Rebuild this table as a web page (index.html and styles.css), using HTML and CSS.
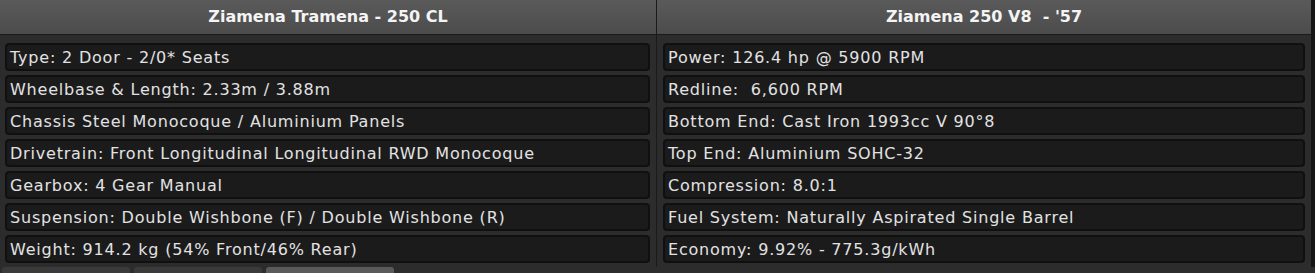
FILE: index.html
```html
<!DOCTYPE html>
<html lang="en">

<head>
    <meta charset="UTF-8">
    <title>Car Comparison</title>
    <link rel="stylesheet" href="styles.css">
</head>

<body>
    <div class="compare">
        <div class="column">
            <div class="column-header">Ziamena Tramena - 250 CL</div>
            <div class="rows">
                <div class="row">Type: 2 Door - 2/0* Seats</div>
                <div class="row">Wheelbase &amp; Length: 2.33m / 3.88m</div>
                <div class="row">Chassis Steel Monocoque / Aluminium Panels</div>
                <div class="row">Drivetrain: Front Longitudinal Longitudinal RWD Monocoque</div>
                <div class="row">Gearbox: 4 Gear Manual</div>
                <div class="row">Suspension: Double Wishbone (F) / Double Wishbone (R)</div>
                <div class="row">Weight: 914.2 kg (54% Front/46% Rear)</div>
            </div>
        </div>
        <div class="column">
            <div class="column-header">Ziamena 250 V8 &nbsp;- '57</div>
            <div class="rows">
                <div class="row">Power: 126.4 hp @ 5900 RPM</div>
                <div class="row">Redline: &nbsp;6,600 RPM</div>
                <div class="row">Bottom End: Cast Iron 1993cc V 90°8</div>
                <div class="row">Top End: Aluminium SOHC-32</div>
                <div class="row">Compression: 8.0:1</div>
                <div class="row">Fuel System: Naturally Aspirated Single Barrel</div>
                <div class="row">Economy: 9.92% - 775.3g/kWh</div>
            </div>
        </div>
    </div>
    <div class="tabs">
        <div class="tab"></div>
        <div class="tab"></div>
        <div class="tab active"></div>
    </div>
</body>

</html>
```

FILE: styles.css
```css
:root {
    --panel-color: #2c2c2c;
    --header-color: #505050;
    --row-color: #1c1b1c;
    --edge-color: #101010;
    --text-color: #e2e2e2;
}

html,
body {
    margin: 0;
    height: 273px;
    overflow: hidden;
    font-family: "DejaVu Sans", sans-serif;
    background-color: var(--panel-color);
    color: var(--text-color);
}

.compare {
    display: grid;
    grid-template-columns: 656px 654px;
    gap: 1px;
    width: 1311px;
    background-color: #1a1a1a;
    border-right: 4px solid #151515;
}

.column {
    background-color: var(--panel-color);
}

.column-header {
    height: 34px;
    line-height: 34px;
    text-align: center;
    font-size: 16px;
    font-weight: bold;
    color: #f4f4f4;
    background: linear-gradient(#5a5a5a, #4c4c4c);
    border-bottom: 1px solid #1a1a1a;
}

.rows {
    display: grid;
    gap: 4px;
    padding: 8px 6px 4px 5px;
}

.column + .column .rows {
    padding-left: 6px;
}

.row {
    height: 24px;
    line-height: 25px;
    padding: 0 3px;
    font-size: 16px;
    letter-spacing: 0.8px;
    background-color: var(--row-color);
    border: 2px solid var(--edge-color);
    border-radius: 4px;
    white-space: nowrap;
}

.tabs {
    display: flex;
    gap: 4px;
    padding-left: 2px;
}

.tab {
    width: 128px;
    height: 10px;
    background-color: #3a3a3a;
    border-radius: 3px 3px 0 0;
}

.tab.active {
    background-color: #5a5a5a;
}
```
